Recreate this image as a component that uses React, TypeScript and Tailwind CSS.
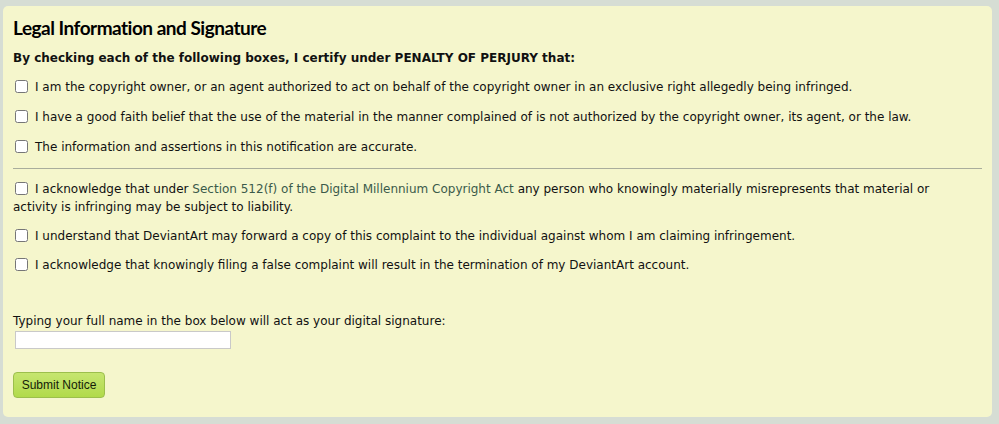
import { useState } from "react";

type Item = {
  id: string;
  text: React.ReactNode;
};

const certify: Item[] = [
  {
    id: "owner",
    text: "I am the copyright owner, or an agent authorized to act on behalf of the copyright owner in an exclusive right allegedly being infringed.",
  },
  {
    id: "faith",
    text: "I have a good faith belief that the use of the material in the manner complained of is not authorized by the copyright owner, its agent, or the law.",
  },
  {
    id: "accurate",
    text: "The information and assertions in this notification are accurate.",
  },
];

const acknowledge: Item[] = [
  {
    id: "dmca",
    text: (
      <>
        I acknowledge that under{" "}
        <a href="#" className="text-[#3b5a4a]">
          Section 512(f) of the Digital Millennium Copyright Act
        </a>{" "}
        any person who knowingly materially misrepresents that material or activity is infringing may be subject to liability.
      </>
    ),
  },
  {
    id: "forward",
    text: "I understand that DeviantArt may forward a copy of this complaint to the individual against whom I am claiming infringement.",
  },
  {
    id: "false",
    text: "I acknowledge that knowingly filing a false complaint will result in the termination of my DeviantArt account.",
  },
];

function CheckRow({ item, checked, onToggle }: { item: Item; checked: boolean; onToggle: () => void }) {
  return (
    <label className="block max-w-[945px] leading-[18px]">
      <input
        type="checkbox"
        checked={checked}
        onChange={onToggle}
        className="mr-[7px] ml-[2px] h-[13px] w-[13px] align-[-2px] accent-[#7ea63a]"
      />
      {item.text}
    </label>
  );
}

export default function App() {
  const [checked, setChecked] = useState<Record<string, boolean>>({});
  const [name, setName] = useState("");

  const toggle = (id: string) => setChecked((c) => ({ ...c, [id]: !c[id] }));

  return (
    <div className="min-h-[424px] bg-[#d6ddd4] pt-[6px] pb-[7px] pl-[3px] pr-[7px]">
      <div className="min-h-[411px] rounded-[5px] bg-[#f5f6cc] pl-[10px] pr-[10px] pt-[12px] pb-[19px] font-['DejaVu_Sans',Verdana,sans-serif] text-[12px] text-[#111]">
        <h2 className="font-['Lato',sans-serif] text-[19px] font-bold leading-[20px] tracking-[-0.5px] text-black">
          Legal Information and Signature
        </h2>
        <p className="mt-[12px] font-bold leading-[16px]">
          By checking each of the following boxes, I certify under PENALTY OF PERJURY that:
        </p>
        <div className="mt-[12px] flex flex-col gap-[12px]">
          {certify.map((item) => (
            <CheckRow key={item.id} item={item} checked={!!checked[item.id]} onToggle={() => toggle(item.id)} />
          ))}
        </div>
        <hr className="mt-[12px] mb-[11px] border-t border-[#a9ad9c]" />
        <div className="flex flex-col gap-[11px]">
          {acknowledge.map((item) => (
            <CheckRow key={item.id} item={item} checked={!!checked[item.id]} onToggle={() => toggle(item.id)} />
          ))}
        </div>
        <p className="mt-[39px] leading-[16px]">Typing your full name in the box below will act as your digital signature:</p>
        <input
          type="text"
          value={name}
          onChange={(e) => setName(e.target.value)}
          className="mt-[2px] ml-[2px] block h-[18px] w-[216px] border border-[#c9c9c9] bg-white px-1 text-[12px] outline-none"
        />
        <button className="mt-[23px] h-[26px] w-[92px] rounded-[4px] border border-[#9cbf4c] bg-gradient-to-b from-[#c6e56f] to-[#b1da4a] font-['Liberation_Sans',Arial,sans-serif] text-[12px] text-[#141c08]">
          Submit Notice
        </button>
      </div>
    </div>
  );
}
